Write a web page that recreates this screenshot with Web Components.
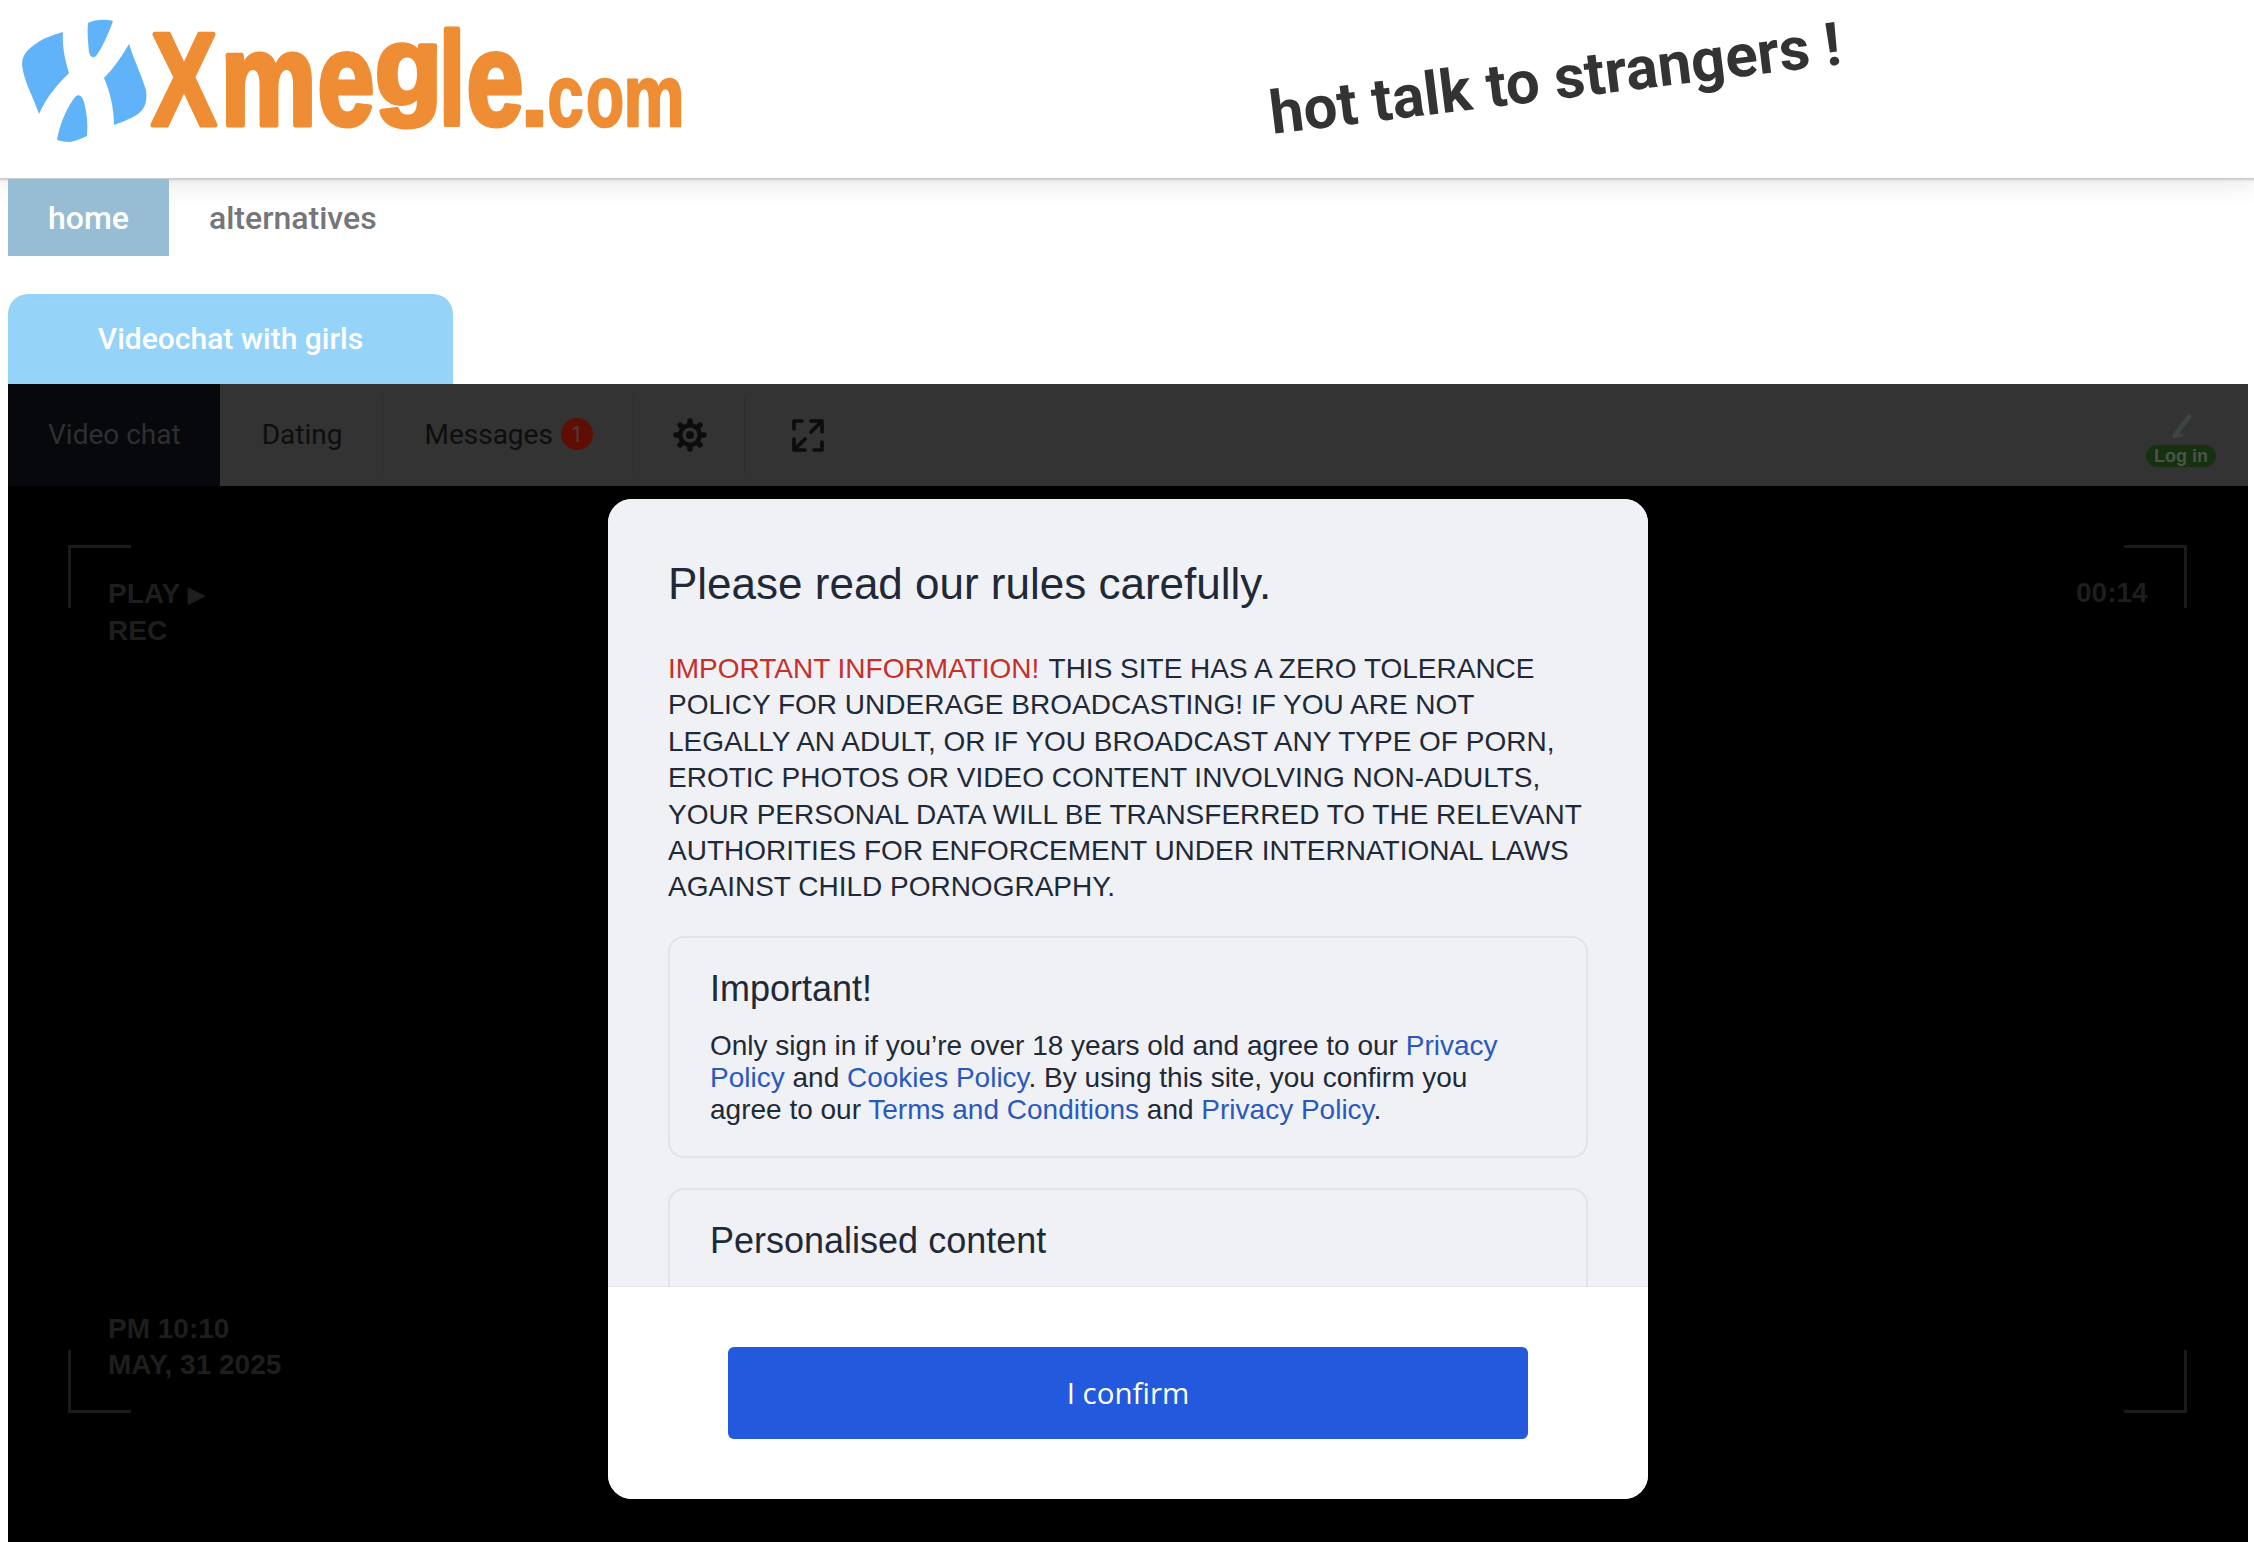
<!DOCTYPE html>
<html lang="en"><head><meta charset="utf-8"><title>Xmegle.com</title>
<style>
html,body{margin:0;height:1542px;overflow:hidden;background:#fff}
body{font-family:Roboto,"Liberation Sans",sans-serif}
</style></head><body>
<x-page>
  <x-header></x-header>
  <x-nav><x-nav-tab active>home</x-nav-tab><x-nav-tab>alternatives</x-nav-tab></x-nav>
  <x-girls-tab>Videochat with girls</x-girls-tab>
  <x-chat>
    <x-chat-bar></x-chat-bar>
    <x-stage>
      <x-hud></x-hud>
      <x-modal>
        <span slot="title">Please read our rules carefully.</span>
        <span slot="lead"><b style="font-weight:400;color:#c62f2a;margin-right:2px">IMPORTANT INFORMATION!</b> THIS SITE HAS A ZERO TOLERANCE POLICY FOR UNDERAGE BROADCASTING! IF YOU ARE NOT LEGALLY AN ADULT, OR IF YOU BROADCAST ANY TYPE OF PORN, EROTIC PHOTOS OR VIDEO CONTENT INVOLVING NON-ADULTS, YOUR PERSONAL DATA WILL BE TRANSFERRED TO THE RELEVANT AUTHORITIES FOR ENFORCEMENT UNDER INTERNATIONAL LAWS AGAINST CHILD PORNOGRAPHY.</span>
        <x-card heading="Important!">Only sign in if you’re over 18 years old and agree to our <x-link>Privacy Policy</x-link> and <x-link>Cookies Policy</x-link>. By using this site, you confirm you agree to our <x-link>Terms and Conditions</x-link> and <x-link>Privacy Policy</x-link>.</x-card>
        <x-card heading="Personalised content"></x-card>
        <x-button slot="footer">I confirm</x-button>
      </x-modal>
    </x-stage>
  </x-chat>
</x-page>
<script>
function def(name, html){
  customElements.define(name, class extends HTMLElement{
    connectedCallback(){
      if(this.shadowRoot) return;
      const r=this.attachShadow({mode:'open'});
      r.innerHTML = typeof html==='function' ? html(this) : html;
    }
  });
}
def('x-page',`<style>:host{display:block;padding:0 6px 0 8px;height:1542px;box-sizing:border-box}</style><slot></slot>`);
def('x-logo',`<style>:host{display:block;width:700px;height:150px}svg{display:block;overflow:visible}
text{font-family:"Liberation Sans",sans-serif;font-weight:700}</style>
<svg width="700" height="150" viewBox="0 0 700 150">
<g fill="#60b2f9">
<path d="M63 32C50 36 42 39 37 43C26 50 22 56 22 65C24 82 33 96 39 114C47 96 58 84 69 73C65 60 62 46 63 32Z"/>
<path d="M88 23C96 19 105 19 113 21C108 35 102 48 96 56C92 59 90 56 89 52C88 42 87 32 88 23Z"/>
<path d="M129 44C134 60 141 74 146 90C148 105 143 112 133 117C127 120 120 123 114 125C114 108 110 92 104 78C114 68 122 56 129 44Z"/>
<path d="M57 140C60 122 68 106 75 97C79 93 82 96 84 102C87 113 88 125 87 136C81 139 75 141 70 142C66 142 61 141 57 140Z"/>
</g>
<g fill="#ee8d34" stroke="#ee8d34" stroke-linejoin="round">
<text y="124.500" stroke-width="5" font-size="132"><tspan x="151.500" textLength="65" lengthAdjust="spacingAndGlyphs">X</tspan><tspan x="220.500" textLength="96" lengthAdjust="spacingAndGlyphs">m</tspan><tspan x="317.500" textLength="57" lengthAdjust="spacingAndGlyphs">e</tspan><tspan x="375" dy="-21" font-size="110" textLength="67" lengthAdjust="spacingAndGlyphs">g</tspan><tspan x="439" dy="21" textLength="26" lengthAdjust="spacingAndGlyphs">l</tspan><tspan x="466.500" textLength="57" lengthAdjust="spacingAndGlyphs">e</tspan></text>
<text y="126" stroke-width="2.500" font-size="88"><tspan x="520" font-size="100" textLength="29" lengthAdjust="spacingAndGlyphs">.</tspan><tspan x="547.500" textLength="36" lengthAdjust="spacingAndGlyphs">c</tspan><tspan x="586" textLength="38" lengthAdjust="spacingAndGlyphs">o</tspan><tspan x="623.500" textLength="61" lengthAdjust="spacingAndGlyphs">m</tspan></text>
</g></svg>`);
def('x-header',`<style>:host{display:flex;align-items:flex-start;margin:0 -6px 0 -8px;height:178px;background:#fff;box-shadow:0 1px 2px 1px #c9c9c9,0 6px 24px rgba(0,0,0,.10)}
x-logo{flex:none}
.tag{margin:0 0 0 574px;padding-top:81px;font:700 60px/66px Roboto,sans-serif;color:#333;white-space:nowrap;transform:rotate(-7deg);transform-origin:0 100%}</style>
<x-logo></x-logo><div class="tag">hot talk to strangers !</div>`);
def('x-nav',`<style>:host{display:flex;padding-top:1px;height:77px}</style><slot></slot>`);
def('x-nav-tab',h=>`<style>:host{display:flex;align-items:center;padding:0 40px;font:500 32px Roboto,sans-serif;color:${h.hasAttribute('active')?'#fff':'#75767a'};background:${h.hasAttribute('active')?'#96bdd3':'transparent'}}</style><slot></slot>`);
def('x-girls-tab',`<style>:host{display:flex;align-items:center;justify-content:center;width:445px;height:90px;margin-top:38px;box-sizing:border-box;padding-bottom:2px;border-radius:20px 20px 0 0;background:#96d3f9;color:#fff;font:500 30px Roboto,sans-serif}</style><slot></slot>`);
def('x-chat',`<style>:host{display:flex;flex-direction:column;height:1158px;background:#000}</style><slot></slot>`);
def('x-chat-tab',h=>`<style>:host{display:flex;align-items:center;gap:8px;box-sizing:border-box;height:100%;padding:0 41px 2px 41px;font:400 28px Roboto,sans-serif;color:${h.hasAttribute('active')?'#2e2f33':'#0e0e0e'};background:${h.hasAttribute('active')?'#07080b':'transparent'};position:relative}
:host([active]){padding:0 39px 2px 40px}
:host(:not([active]))::after{content:"";position:absolute;right:0;top:12px;bottom:12px;width:1px;background:#2d2d2d}
:host([plain])::after{display:none}
svg{display:block}</style><slot></slot>`);
def('x-badge',`<style>:host{display:flex;align-items:center;justify-content:center;width:32px;height:32px;border-radius:50%;background:#5e0e04;color:#4f3d3a;font:400 22px Roboto,sans-serif}</style><slot></slot>`);
def('x-chat-bar',`<style>:host{display:flex;height:102px;box-sizing:border-box;background:#333;align-items:stretch}
.sp{flex:1}.login{display:flex;flex-direction:column;align-items:center;justify-content:flex-end;padding:0 32px 19px 0}
.pill{width:70px;height:22px;border-radius:11px;background:#163010;color:#4a5548;font:700 18px/22px "Liberation Sans",sans-serif;text-align:center}
svg{display:block}</style>
<x-chat-tab active>Video chat</x-chat-tab>
<x-chat-tab style="padding-left:42px">Dating</x-chat-tab>
<x-chat-tab>Messages<x-badge>1</x-badge></x-chat-tab>
<x-chat-tab style="padding:0 38px 0 39px"><svg width="34" height="34" viewBox="0 0 34 34"><g stroke="#0c0c0c" stroke-width="5.500" stroke-linecap="round"><path d="M17 3v28M3 17h28M7.100 7.100l19.800 19.800M26.900 7.100 7.100 26.900"/></g><circle cx="17" cy="17" r="12" fill="#0c0c0c"/><circle cx="17" cy="17" r="7.500" fill="#333"/><circle cx="17" cy="17" r="4" fill="#0c0c0c"/></svg></x-chat-tab>
<x-chat-tab plain style="padding:0 0 0 47px"><svg width="32" height="33" viewBox="0 0 32 33" fill="none" stroke="#0c0c0c" stroke-width="3.600" stroke-linecap="round" stroke-linejoin="round"><path d="M2 10V2h8M30 23v8h-8"/><path d="M19 2h11v11M30 2 19 13M13 31H2V20M2 31l11-11"/></svg></x-chat-tab>
<div class="sp"></div>
<div class="login"><svg width="34" height="34" viewBox="0 0 34 34" fill="none" stroke="#3e4440" stroke-width="5" stroke-linecap="round"><path d="M25 6 11 24"/><path d="M10 26l8-2" stroke-width="3"/></svg><div class="pill">Log in</div></div>`);
def('x-stage',`<style>:host{display:block;position:relative;flex:1;background:#000}</style><slot></slot>`);
def('x-hud',`<style>:host{display:block;position:absolute;left:0;top:0;right:0;bottom:0;font:700 28px/36px "Liberation Sans",sans-serif;color:#1e1e1e}
.c{position:absolute;width:60px;height:60px;border:0 solid #1b1b1b}
.t{position:absolute;white-space:nowrap}
.p{font-size:22px;vertical-align:1px;margin-left:1px}</style>
<div class="c" style="left:60px;top:59px;border-width:3px 0 0 3px"></div>
<div class="c" style="left:2116px;top:59px;border-width:3px 3px 0 0"></div>
<div class="c" style="left:60px;top:864px;border-width:0 0 3px 3px"></div>
<div class="c" style="left:2116px;top:864px;border-width:0 3px 3px 0"></div>
<div class="t" style="left:100px;top:90px">PLAY <span class="p">▶</span><br>REC</div>
<div class="t" style="left:2068px;top:89px">00:14</div>
<div class="t" style="left:100px;top:825px">PM 10:10<br>MAY, 31 2025</div>`);
def('x-modal',`<style>:host{display:flex;flex-direction:column;position:absolute;left:600px;top:13px;width:1040px;height:1000px;border-radius:24px;overflow:hidden;background:#fff;color:#1f2937;font-family:"Liberation Sans",Arial,sans-serif}
.body{flex:1;min-height:0;overflow:hidden;box-sizing:border-box;padding:56px 60px 0;background:#eff1f5}
h2{margin:0 0 38px;font:400 44px/58px "Liberation Sans",sans-serif}
p{margin:0 0 30px;font:400 28px/36.4px "Liberation Sans",sans-serif}
.foot{flex:none;box-sizing:border-box;height:213px;padding:60px 120px;background:#fff;border-top:1px solid #e5e7eb}</style>
<div class="body"><h2><slot name="title"></slot></h2><p><slot name="lead"></slot></p><slot></slot></div>
<div class="foot"><slot name="footer"></slot></div>`);
def('x-card',h=>`<style>:host{display:block;box-sizing:border-box;height:222px;margin-bottom:30px;padding:30px 40px 0;border:2px solid #e1e3e8;border-radius:16px;font:400 28px/32px "Liberation Sans",sans-serif;color:#1f2937}
h3{margin:0 0 20px;font:400 36px/42px "Liberation Sans",sans-serif}</style>
<h3>${h.getAttribute('heading')}</h3><slot></slot>`);
def('x-link',`<style>:host{display:inline;color:#2a59bd}</style><slot></slot>`);
def('x-button',`<style>:host{display:flex;align-items:center;justify-content:center;height:92px;box-sizing:border-box;padding-bottom:2px;border-radius:6px;background:#2259dd;color:#fff;font:400 29.5px "Open Sans",sans-serif}</style><slot></slot>`);
</script>
</body></html>
